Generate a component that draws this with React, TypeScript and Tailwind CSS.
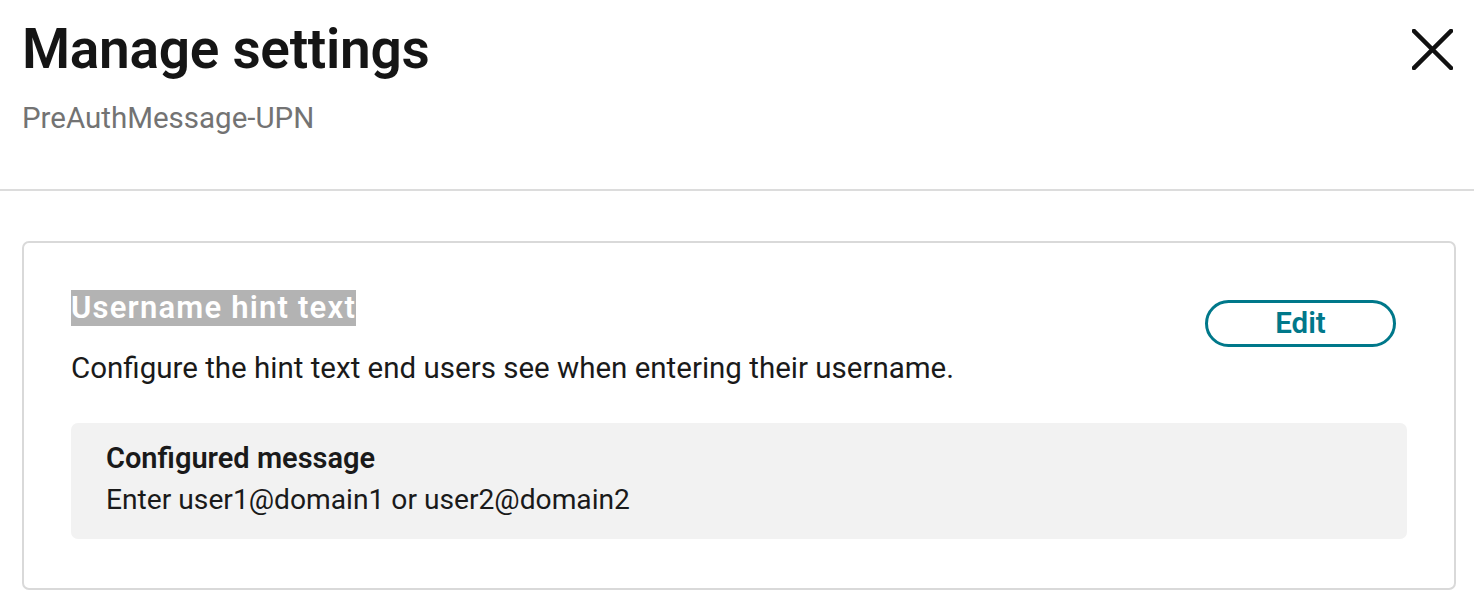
export default function App() {
  return (
    <div className="min-h-screen bg-white font-['Roboto',sans-serif] text-[#1a1a1a]">
      <div className="relative px-[22px] pt-[17px] pb-[53px] border-b-2 border-[#dcdcdc]">
        <h1 className="text-[55px] leading-[64px] font-semibold tracking-[-0.3px] text-[#151515]">Manage settings</h1>
        <p className="mt-[19px] text-[29.5px] leading-[36px] text-[#737373]">PreAuthMessage-UPN</p>
        <button className="absolute right-[21px] top-[29px] w-[41px] h-[41px]" aria-label="Close">
          <svg viewBox="0 0 41 41" className="w-full h-full">
            <path d="M2 2 L39 39 M39 2 L2 39" stroke="#111" strokeWidth="4.5" strokeLinecap="square" fill="none" />
          </svg>
        </button>
      </div>

      <div className="pl-[22px] pr-[18px] pt-[50px]">
        <div className="border-2 border-[#d9d9d9] rounded-[7px] px-[47px] pt-[47px] pb-[49px]">
          <div className="flex items-start justify-between">
            <div>
              <h2 className="inline-block bg-[#b3b3b3] text-white text-[31px] leading-[36px] font-semibold tracking-[1.2px]">Username hint text</h2>
              <p className="mt-[24px] text-[29.5px] leading-[36px]">Configure the hint text end users see when entering their username.</p>
            </div>
            <button className="mt-[10px] mr-[11px] w-[191px] h-[47px] rounded-full border-[3px] border-[#00788a] text-[#00788a] text-[29.5px] font-semibold leading-none">
              Edit
            </button>
          </div>
          <div className="mt-[37px] bg-[#f2f2f2] rounded-[7px] px-[35px] pt-[15px] pb-[19px]">
            <div className="text-[29px] leading-[41px] font-semibold">Configured message</div>
            <div className="text-[28.2px] leading-[41px]">Enter user1@domain1 or user2@domain2</div>
          </div>
        </div>
      </div>
    </div>
  );
}
